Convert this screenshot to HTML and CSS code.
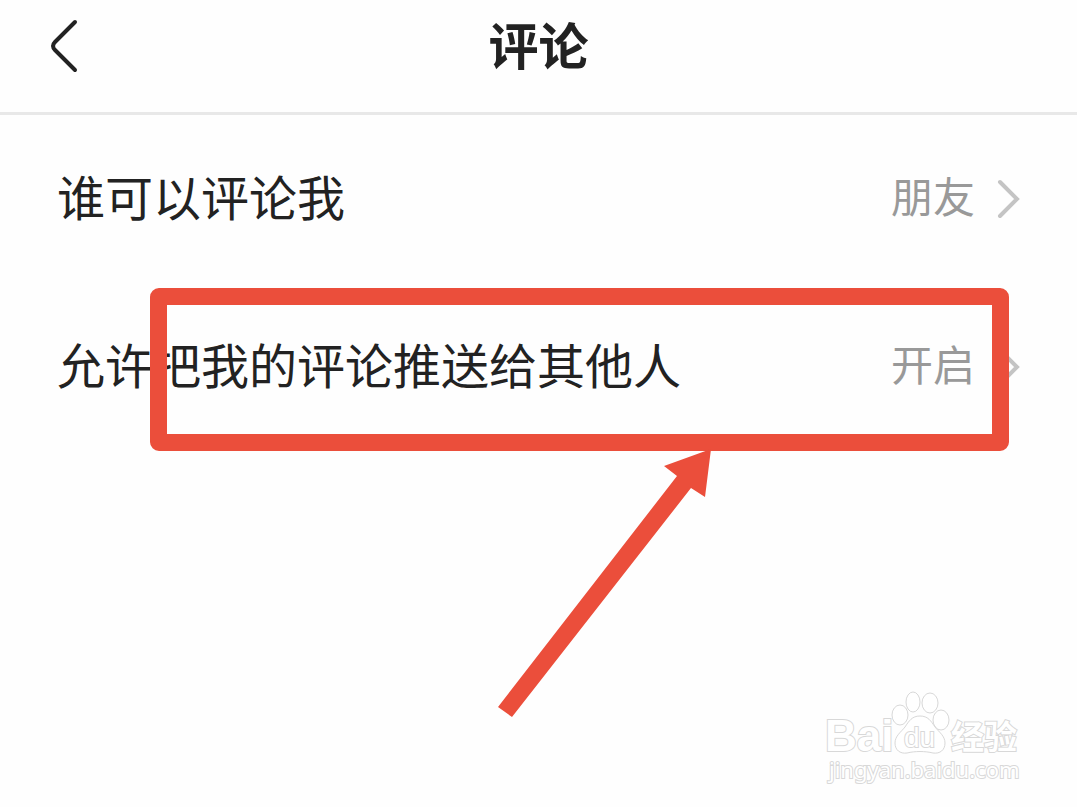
FILE: index.html
```html
<!DOCTYPE html>
<html lang="zh-CN">
<head>
  <meta charset="UTF-8">
  <meta name="viewport" content="width=device-width, initial-scale=1.0">
  <title>评论</title>
  <link rel="stylesheet" href="styles.css">
</head>
<body>
  <header class="header">
    <button class="back" type="button" aria-label="返回">
      <svg width="30" height="54" viewBox="0 0 30 54">
        <path d="M25 3 L5 23 Q1 27 5 31 L25 51" />
      </svg>
    </button>
    <h1 class="title">评论</h1>
  </header>

  <main class="settings">
    <button class="row" type="button">
      <span class="label">谁可以评论我</span>
      <span class="value">朋友</span>
      <svg class="chevron" width="24" height="40" viewBox="0 0 24 40">
        <path d="M3 3 L20 20 L3 37" />
      </svg>
    </button>
    <div class="marked">
      <button class="row" type="button">
        <span class="label">允许把我的评论推送给其他人</span>
        <span class="value">开启</span>
        <svg class="chevron" width="24" height="40" viewBox="0 0 24 40">
          <path d="M3 3 L20 20 L3 37" />
        </svg>
      </button>
      <div class="mark-box"></div>
      <svg class="mark-arrow" width="214" height="268" viewBox="0 0 214 268">
        <path d="M0 258 L179 27 L166 17 L213 0 L207 48 L193 39 L14 268 Z" />
      </svg>
    </div>
  </main>

  <svg class="watermark" width="200" height="100" viewBox="0 0 200 100">
    <g class="paw">
      <ellipse cx="80" cy="25" rx="8" ry="10" />
      <ellipse cx="93" cy="12" rx="7" ry="10" />
      <ellipse cx="110" cy="13" rx="8" ry="10" />
      <ellipse cx="121" cy="30" rx="8" ry="10" />
      <path d="M100 26 C92 26 89 31 85 37 C81 42 75 46 75 53 C75 60 80 64 87 63 C95 61 105 61 113 63 C120 64 125 60 125 53 C125 46 119 42 115 37 C111 31 108 26 100 26 Z" />
    </g>
    <text class="wm-bai" x="5" y="61">Bai</text>
    <text class="wm-du" x="84" y="57">du</text>
    <text class="wm-cjk" x="131" y="59">经验</text>
    <text class="wm-url" x="9" y="88">jingyan.baidu.com</text>
  </svg>
</body>
</html>
```

FILE: styles.css
```css
* {
  box-sizing: border-box;
}

body {
  position: relative;
  min-height: 100vh;
  margin: 0;
  background-color: #fefefe;
  color: #222;
  font-family: "Noto Sans CJK SC", sans-serif;
}

button {
  border: none;
  background: none;
  color: inherit;
  font-family: inherit;
  cursor: pointer;
}

svg {
  display: block;
  flex: none;
}

.header {
  display: grid;
  grid-template-columns: 1fr auto 1fr;
  align-items: center;
  height: 115px;
  padding: 0 50px 20px;
  border-bottom: 3px solid #e8e8e8;
}

.back {
  justify-self: start;
  padding: 0;
}

.back path {
  fill: none;
  stroke: #222;
  stroke-width: 4;
  stroke-linecap: round;
}

.title {
  margin: 0;
  padding-bottom: 6px;
  font-size: 50px;
  line-height: 72px;
  font-weight: bold;
}

.row {
  display: flex;
  align-items: center;
  width: 100%;
  height: 168px;
  padding: 0 56px 0 57px;
  text-align: left;
}

.label,
.value {
  padding-bottom: 8px;
  line-height: 72px;
}

.label {
  flex: 1;
  font-size: 48px;
}

.value {
  margin-right: 22px;
  color: #999;
  font-size: 42px;
}

.chevron path {
  fill: none;
  stroke: #c4c4c4;
  stroke-width: 4;
  stroke-linecap: round;
}

/* red callout over the second setting */
.marked {
  position: relative;
}

.mark-box {
  position: absolute;
  top: 5px;
  right: 68px;
  left: 150px;
  height: 163px;
  border: 17px solid #eb4e3b;
  border-radius: 9px;
  pointer-events: none;
}

.mark-arrow {
  position: absolute;
  top: 166px;
  left: 498px;
  pointer-events: none;
}

.mark-arrow path {
  fill: #eb4e3b;
}

.watermark {
  position: absolute;
  right: 57px;
  bottom: 17px;
  overflow: visible;
  fill: #fff;
  stroke: #d8d8d8;
  stroke-width: 1;
}

.watermark text {
  stroke-width: 2;
  paint-order: stroke;
}

.wm-bai {
  font: bold 44px "Liberation Sans", sans-serif;
}

.wm-du {
  font: 28px "Liberation Sans", sans-serif;
}

.wm-cjk {
  font: bold 33px "Noto Sans CJK SC", sans-serif;
}

.wm-url {
  font: 22px "Noto Sans", sans-serif;
}
```
